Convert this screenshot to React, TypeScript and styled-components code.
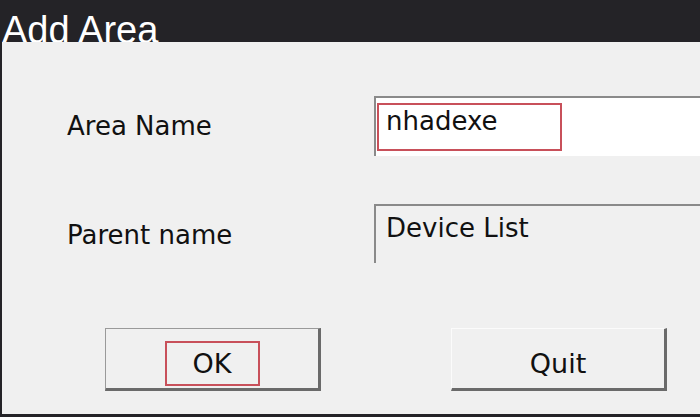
import React from "react";
import styled, { createGlobalStyle } from "styled-components";

const Global = createGlobalStyle`
  html, body { margin: 0; padding: 0; background: #242327; }
  #root { width: 700px; height: 417px; overflow: hidden; }
`;

const Window = styled.div`
  width: 700px;
  height: 417px;
  background: #242327;
  display: flex;
  flex-direction: column;
  padding: 0 0 3px 2px;
  box-sizing: border-box;
  overflow: hidden;
`;

const TitleBar = styled.div`
  height: 42px;
  flex: none;
  margin-left: -2px;
  padding: 11px 0 0 2px;
  box-sizing: border-box;
  overflow: hidden;
  font-family: "Liberation Sans", Arial, sans-serif;
  font-size: 38px;
  line-height: 38px;
  color: #ffffff;
  white-space: nowrap;
`;

const Body = styled.div`
  flex: 1;
  background: #f0f0f0;
  display: flex;
  flex-direction: column;
  padding-top: 54px;
  font-family: "DejaVu Sans", Tahoma, sans-serif;
  color: #111111;
  overflow: hidden;
`;

const Form = styled.div`
  display: grid;
  grid-template-columns: 307px 1fr;
  row-gap: 48px;
  padding-left: 65px;
`;

const Label = styled.div<{ $shift?: number }>`
  align-self: center;
  font-size: 26px;
  line-height: 30px;
  padding-top: ${(p) => p.$shift ?? 0}px;
`;

const Field = styled.div<{ $editable?: boolean }>`
  height: ${(p) => (p.$editable ? 60 : 59)}px;
  box-sizing: border-box;
  background: ${(p) => (p.$editable ? "#ffffff" : "#f0f0f0")};
  border-top: 2px solid #8a8a8a;
  border-left: 2px solid #8a8a8a;
  padding: ${(p) => (p.$editable ? "5px 0 0 1px" : "7px 0 0 10px")};
  font-size: 26px;
  line-height: 30px;
  white-space: nowrap;
`;

const Highlight = styled.span<{ $on?: boolean }>`
  display: inline-block;
  box-sizing: border-box;
  border: 2px solid ${(p) => (p.$on ? "#c8505a" : "transparent")};
`;

const FieldMark = styled(Highlight)`
  width: 185px;
  height: 48px;
  padding: 1px 0 0 7px;
`;

const Buttons = styled.div`
  display: flex;
  gap: 130px;
  padding-left: 103px;
  margin-top: 65px;
`;

const Button = styled.div<{ $default?: boolean }>`
  width: 216px;
  height: 63px;
  box-sizing: border-box;
  background: #f0f0f0;
  border-top: 1px solid ${(p) => (p.$default ? "#9a9a9a" : "#fbfbfb")};
  border-left: 1px solid ${(p) => (p.$default ? "#9a9a9a" : "#fbfbfb")};
  border-right: 3px solid #6a6a6a;
  border-bottom: 3px solid #6a6a6a;
  display: flex;
  justify-content: center;
  align-items: flex-start;
  padding-top: 12px;
  font-size: 27px;
`;

const ButtonMark = styled(Highlight)`
  height: 45px;
  line-height: 41px;
  min-width: 95px;
  text-align: center;
`;

export default function App() {
  return (
    <>
      <Global />
      <Window>
        <TitleBar>Add Area</TitleBar>
        <Body>
          <Form>
            <Label>Area Name</Label>
            <Field $editable>
              <FieldMark $on>nhadexe</FieldMark>
            </Field>
            <Label $shift={2}>Parent name</Label>
            <Field>Device List</Field>
          </Form>
          <Buttons>
            <Button $default>
              <ButtonMark $on>OK</ButtonMark>
            </Button>
            <Button>
              <ButtonMark>Quit</ButtonMark>
            </Button>
          </Buttons>
        </Body>
      </Window>
    </>
  );
}
